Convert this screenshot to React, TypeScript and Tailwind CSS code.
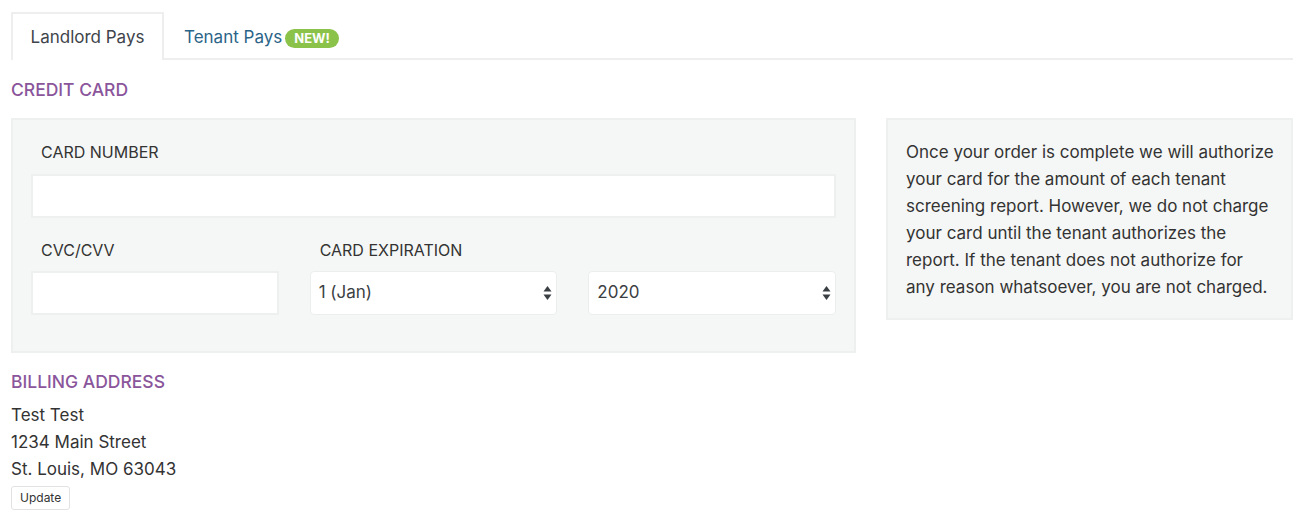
import React, { useState } from 'react';

const months = [
  '1 (Jan)', '2 (Feb)', '3 (Mar)', '4 (Apr)', '5 (May)', '6 (Jun)',
  '7 (Jul)', '8 (Aug)', '9 (Sep)', '10 (Oct)', '11 (Nov)', '12 (Dec)',
];
const years = ['2020', '2021', '2022', '2023', '2024', '2025', '2026'];

const notice = [
  'Once your order is complete we will authorize',
  'your card for the amount of each tenant',
  'screening report. However, we do not charge',
  'your card until the tenant authorizes the',
  'report. If the tenant does not authorize for',
  'any reason whatsoever, you are not charged.',
];

const Arrows = () => (
  <svg width="9" height="16" viewBox="0 0 9 16" className="pointer-events-none">
    <path d="M4.5 1 L8.5 6.5 H0.5 Z" fill="#3a3f44" />
    <path d="M4.5 15 L8.5 9.5 H0.5 Z" fill="#3a3f44" />
  </svg>
);

const Select = ({ options }: { options: string[] }) => {
  const [value, setValue] = useState(options[0]);
  return (
    <div className="relative">
      <select
        value={value}
        onChange={(e) => setValue(e.target.value)}
        className="w-full h-[44px] appearance-none bg-white rounded-[4px] border border-[#eceeed] pl-[8px] text-[17px] text-[#3b3f43] outline-none"
      >
        {options.map((o) => (
          <option key={o}>{o}</option>
        ))}
      </select>
      <span className="absolute right-[5px] top-[14px]">
        <Arrows />
      </span>
    </div>
  );
};

const App = () => {
  const [tab, setTab] = useState('landlord');

  return (
    <div
      className="min-h-[528px] bg-white pl-[11px] pr-[21px] pt-[12px] text-[#333]"
      style={{ fontFamily: 'Inter, "Liberation Sans", Arial, sans-serif' }}
    >
      <div className="flex border-b-2 border-[#eeeeee] h-[48px]">
        <button
          type="button"
          onClick={() => setTab('landlord')}
          className={`h-[48px] w-[153px] pt-[1px] text-[17px] text-[#3e444a] border-2 border-b-0 ${
            tab === 'landlord' ? 'border-[#eeeeee] bg-white' : 'border-transparent'
          }`}
        >
          Landlord Pays
        </button>
        <button
          type="button"
          onClick={() => setTab('tenant')}
          className={`h-[48px] pl-[18px] pr-[18px] pt-[1px] flex items-center gap-[3px] text-[17px] text-[#2a6488] border-2 border-b-0 ${
            tab === 'tenant' ? 'border-[#eeeeee]' : 'border-transparent'
          }`}
        >
          Tenant Pays
          <span className="bg-[#8bc24a] text-white text-[13px] font-bold rounded-full px-[9px] h-[19px] leading-[19px] mt-[1px]">
            NEW!
          </span>
        </button>
      </div>

      <h3 className="text-[17.5px] font-medium text-[#8a559b] mt-[20px] leading-[20px]">CREDIT CARD</h3>

      <div className="flex gap-[30px] mt-[18px] items-start">
        <div className="w-[845px] h-[235px] bg-[#f5f7f6] border-2 border-[#eef0ef] px-[18px] pt-[22px]">
          <label className="block pl-[10px] text-[16px] text-[#333] leading-[20px]">CARD NUMBER</label>
          <input
            type="text"
            className="block w-full h-[44px] mt-[12px] bg-white border-2 border-[#eef0ef] outline-none px-[10px]"
          />
          <div className="grid grid-cols-3 gap-x-[31px] mt-[22px]">
            <div>
              <label className="block pl-[10px] text-[16px] leading-[20px]">CVC/CVV</label>
              <input
                type="text"
                className="block w-full h-[44px] mt-[11px] bg-white border-2 border-[#eef0ef] outline-none px-[10px]"
              />
            </div>
            <div>
              <label className="block pl-[10px] text-[16px] leading-[20px]">CARD EXPIRATION</label>
              <div className="mt-[11px]">
                <Select options={months} />
              </div>
            </div>
            <div>
              <div className="h-[20px]" />
              <div className="mt-[11px]">
                <Select options={years} />
              </div>
            </div>
          </div>
        </div>

        <div className="w-[407px] h-[202px] bg-[#f5f7f6] border-2 border-[#eef0ef] pl-[18px] pr-[4px] pt-[19px] text-[17px] leading-[27px] text-[#333]">
          {notice.map((line) => (
            <div key={line} className="whitespace-nowrap">
              {line}
            </div>
          ))}
        </div>
      </div>

      <h3 className="text-[17.5px] font-medium text-[#8a559b] mt-[19px] leading-[20px]">BILLING ADDRESS</h3>
      <div className="mt-[10px] text-[17px] leading-[27px] text-[#333]">
        <div>Test Test</div>
        <div>1234 Main Street</div>
        <div>St. Louis, MO 63043</div>
      </div>
      <button
        type="button"
        className="mt-[3px] h-[24px] px-[8px] text-[12px] text-[#333] bg-white border border-[#e2e2e2] rounded-[3px]"
      >
        Update
      </button>
    </div>
  );
};

export default App;
